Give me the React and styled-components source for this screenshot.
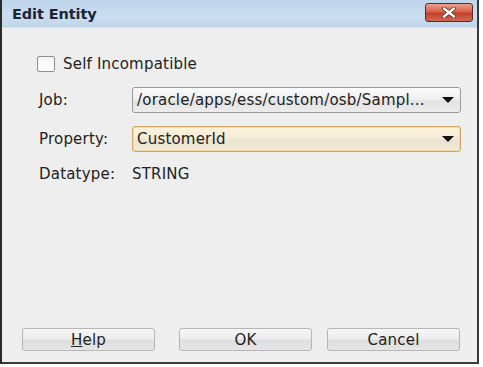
import React from 'react';
import styled, { createGlobalStyle } from 'styled-components';

const GlobalStyle = createGlobalStyle`
  html, body {
    margin: 0;
    padding: 0;
    background: #ffffff;
  }
  body {
    font-family: "DejaVu Sans", Verdana, sans-serif;
  }
`;

const Window = styled.div`
  width: 479px;
  height: 364px;
  box-sizing: border-box;
  border-left: 2px solid #2b2b2b;
  border-right: 2px solid #3a3a3a;
  border-bottom: 2px solid #3a3a3a;
  background: #eeeeee;
  display: flex;
  flex-direction: column;
`;

const TitleBar = styled.div`
  height: 27px;
  display: flex;
  align-items: center;
  justify-content: space-between;
  padding: 0 4px 0 10px;
  background: linear-gradient(#bed4ea, #cadef1 60%, #bfd5ea);
  border-bottom: 1px solid #d4dfea;
`;

const Title = styled.div`
  font-size: 14.5px;
  font-weight: bold;
  color: #1c2633;
  letter-spacing: -0.1px;
`;

const CloseButton = styled.div`
  width: 48px;
  height: 19px;
  margin-top: -3px;
  box-sizing: border-box;
  border: 1px solid #5a2a24;
  border-radius: 3px;
  background: linear-gradient(#e9a391, #d7604a 45%, #c0402b 55%, #d16a52);
  display: flex;
  align-items: center;
  justify-content: center;
`;

const Body = styled.div`
  flex: 1;
  display: flex;
  flex-direction: column;
  padding: 27px 16px 11px 35px;
  color: #222;
  font-size: 15px;
  letter-spacing: 0.2px;
`;

const CheckRow = styled.label`
  display: flex;
  align-items: center;
  gap: 8px;
  height: 18px;
`;

const Box = styled.span`
  width: 18px;
  height: 16px;
  box-sizing: border-box;
  border: 1px solid #8e8e8e;
  border-radius: 2px;
  background: linear-gradient(#f4f4f4, #ffffff);
`;

const Form = styled.div`
  display: grid;
  grid-template-columns: 95px 329px;
  row-gap: 13px;
  align-items: center;
  margin-top: 14px;
`;

const Label = styled.div`
  padding-left: 2px;
`;

const Combo = styled.div`
  height: 26px;
  box-sizing: border-box;
  display: flex;
  align-items: center;
  justify-content: space-between;
  padding: 0 6px 0 4px;
  border: 1px solid ${p => (p.focused ? '#cfa865' : '#9a9a9a')};
  border-radius: 3px;
  background: ${p =>
    p.focused
      ? 'linear-gradient(#fdf3dc, #f5ecd8 45%, #ece3d0 55%, #f2ead8)'
      : 'linear-gradient(#fbfbfb, #f0f0f0 45%, #e3e3e3 55%, #ececec)'};
  box-shadow: ${p => (p.focused ? 'inset 0 0 0 1px #f3d9a3' : 'none')};
  white-space: nowrap;
  overflow: hidden;
`;

const Arrow = styled.span`
  width: 0;
  height: 0;
  border-left: 6px solid transparent;
  border-right: 6px solid transparent;
  border-top: 6px solid #111;
  flex-shrink: 0;
`;

const Value = styled.div``;

const Spacer = styled.div`
  flex: 1;
`;

const ButtonRow = styled.div`
  display: flex;
  margin-left: -15px;
`;

const Button = styled.div`
  width: 133px;
  height: 23px;
  flex-shrink: 0;
  margin-left: ${p => p.gap || 0}px;
  box-sizing: border-box;
  display: flex;
  align-items: center;
  justify-content: center;
  border: 1px solid #b5b5b5;
  border-radius: 3px;
  background: linear-gradient(#f7f7f7, #ededed 45%, #dedede 55%, #e6e6e6);
  font-size: 15px;
  color: #222;
`;

const Mnemonic = styled.span`
  text-decoration: underline;
`;

export default function App() {
  return (
    <>
      <GlobalStyle />
      <Window>
        <TitleBar>
          <Title>Edit Entity</Title>
          <CloseButton>
            <svg width="16" height="11" viewBox="0 0 16 11">
              <path d="M3 1.5 L13 9.5 M13 1.5 L3 9.5" stroke="#5a2a24" strokeWidth="4" strokeLinecap="round" />
              <path d="M3 1.5 L13 9.5 M13 1.5 L3 9.5" stroke="#ffffff" strokeWidth="2.4" strokeLinecap="round" />
            </svg>
          </CloseButton>
        </TitleBar>
        <Body>
          <CheckRow>
            <Box />
            <span>Self Incompatible</span>
          </CheckRow>
          <Form>
            <Label>Job:</Label>
            <Combo>
              <span>/oracle/apps/ess/custom/osb/Sampl...</span>
              <Arrow />
            </Combo>
            <Label>Property:</Label>
            <Combo focused>
              <span>CustomerId</span>
              <Arrow />
            </Combo>
            <Label>Datatype:</Label>
            <Value>STRING</Value>
          </Form>
          <Spacer />
          <ButtonRow>
            <Button><Mnemonic>H</Mnemonic>elp</Button>
            <Button gap={24}>OK</Button>
            <Button gap={15}>Cancel</Button>
          </ButtonRow>
        </Body>
      </Window>
    </>
  );
}
